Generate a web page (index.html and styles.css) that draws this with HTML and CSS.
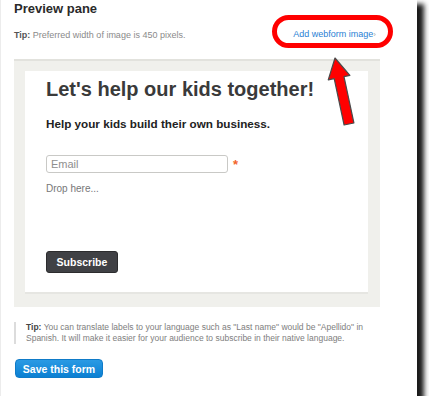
FILE: index.html
```html
<!DOCTYPE html>
<html>
<head>
<meta charset="utf-8">
<link rel="stylesheet" href="styles.css">
</head>
<body>
<div class="panel">
  <div class="head">
    <div class="head-left">
      <h1 class="title">Preview pane</h1>
      <p class="tip"><b>Tip:</b> Preferred width of image is 450 pixels.</p>
    </div>
    <a class="add-link">Add webform image<span class="chev">›</span></a>
  </div>
  <div class="frame">
    <div class="form-box">
      <h2 class="form-title">Let's help our kids together!</h2>
      <p class="form-sub">Help your kids build their own business.</p>
      <div class="field-row">
        <div class="email-input">Email</div>
        <span class="req">*</span>
      </div>
      <p class="drop">Drop here...</p>
      <button class="subscribe">Subscribe</button>
    </div>
  </div>
  <p class="note"><b>Tip:</b> You can translate labels to your language such as "Last name" would be "Apellido" in Spanish. It will make it easier for your audience to subscribe in their native language.</p>
  <button class="save">Save this form</button>

  <svg class="annot" width="429" height="408" viewBox="0 0 429 408">
    <rect x="274.5" y="17.5" width="116" height="28" rx="14" ry="14" fill="none" stroke="#ff0000" stroke-width="5"/>
    <polygon points="335,58 349.9,75.4 344,76.6 353.9,123 344.1,125 334.2,78.6 328.3,79.8" fill="#ff0000" stroke="#4a4a4a" stroke-width="1.2" stroke-linejoin="round"/>
  </svg>
</div>
</body>
</html>
```
FILE: styles.css
```css
html, body {
  margin: 0;
  padding: 0;
  background: #ffffff;
}
body {
  font-family: "Liberation Sans", Arial, sans-serif;
}
.panel {
  position: relative;
  width: 417px;
  height: 396px;
  box-sizing: border-box;
  padding-left: 13px;
  background: #ffffff;
  border-left: 1px solid #ececec;
  box-shadow: 6px 5px 5px 1px rgba(15, 15, 15, 0.95);
}
.head {
  width: 366px;
  display: flex;
  justify-content: space-between;
  align-items: flex-end;
}
.title {
  margin: 0;
  padding-top: 1px;
  font-size: 13px;
  line-height: 16px;
  font-weight: bold;
  color: #2a2a2a;
}
.tip {
  margin: 12px 0 0 0;
  font-size: 9px;
  line-height: 12px;
  color: #8a8a8a;
}
.tip b {
  color: #555555;
}
.add-link {
  font-size: 9px;
  line-height: 12px;
  color: #2a7fd4;
  margin-right: 4px;
}
.chev {
  color: #aaaaaa;
  font-size: 8px;
}
.frame {
  margin-top: 18px;
  width: 366px;
  box-sizing: border-box;
  padding: 10px 12px 13px 11px;
  background: #f0f0ec;
  border-top: 2px solid #e2e2dd;
}
.form-box {
  height: 223px;
  box-sizing: border-box;
  background: #ffffff;
  padding: 6px 0 0 21px;
  border-bottom: 2px solid #e6e6e2;
}
.form-title {
  margin: 0;
  font-size: 20px;
  line-height: 24px;
  font-weight: bold;
  color: #3a3a3a;
}
.form-sub {
  margin: 16px 0 0 0;
  font-size: 11.7px;
  line-height: 14px;
  font-weight: bold;
  color: #222222;
}
.field-row {
  margin-top: 24px;
  display: flex;
  align-items: center;
  gap: 5px;
}
.email-input {
  width: 182px;
  height: 18px;
  box-sizing: border-box;
  border: 1px solid #c9c9c6;
  border-radius: 3px;
  padding-left: 4px;
  font-size: 11px;
  line-height: 16px;
  color: #8e8e8e;
}
.req {
  color: #f2642a;
  font-size: 13px;
  font-weight: bold;
  line-height: 16px;
  padding-top: 2px;
}
.drop {
  margin: 10px 0 0 0;
  font-size: 10px;
  line-height: 12px;
  color: #777777;
}
.subscribe {
  display: block;
  margin-top: 56px;
  width: 72px;
  height: 22px;
  padding: 0;
  border: 1px solid #2c2c2e;
  border-radius: 3px;
  background: #404145;
  color: #ffffff;
  font-family: "Liberation Sans", Arial, sans-serif;
  font-size: 10.5px;
  font-weight: bold;
}
.note {
  margin: 15px 0 0 0;
  width: 362px;
  box-sizing: border-box;
  border-left: 2px solid #dcdcdc;
  padding-left: 10px;
  font-size: 8.5px;
  line-height: 11px;
  color: #7e7e7e;
}
.note b {
  color: #444444;
}
.save {
  display: block;
  margin: 15px 0 0 1px;
  width: 88px;
  height: 19px;
  padding: 0;
  border: 1px solid #0f7bc8;
  border-radius: 4px;
  background: linear-gradient(#2a9ae4, #0b80d2);
  color: #ffffff;
  font-family: "Liberation Sans", Arial, sans-serif;
  font-size: 10.5px;
  font-weight: bold;
}
.annot {
  position: absolute;
  left: -1px;
  top: 0;
  pointer-events: none;
}
```
